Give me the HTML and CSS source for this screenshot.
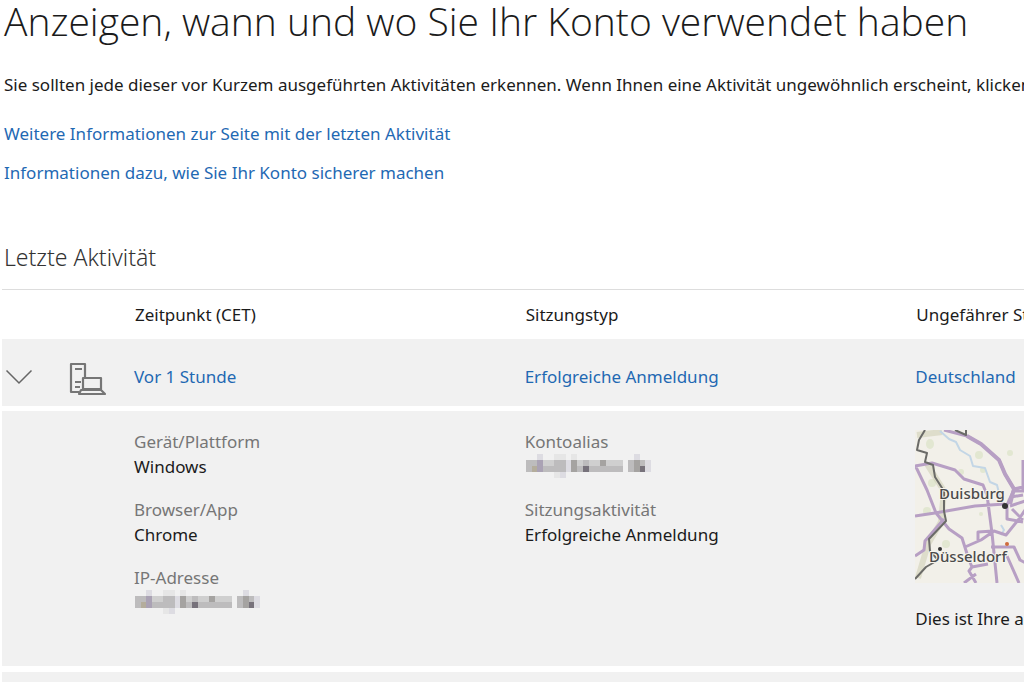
FILE: index.html
```html
<!DOCTYPE html>
<html lang="de">
<head>
<meta charset="utf-8">
<title>Letzte Aktivität</title>
<link rel="stylesheet" href="styles.css">
</head>
<body>
<svg class="defs" aria-hidden="true">
  <symbol id="redacted" viewBox="0 0 22 4" preserveAspectRatio="none">
    <g shape-rendering="crispEdges">
      <path fill="#bdbcbd" d="M0 1h17v2H0zM18 1h3v2h-3z"/>
      <path fill="#dddce2" d="M2 0h1v1H2zM6 3h1v1H6zM19 0h1v1h-1zM21 1h1v2h-1zM7 1h1v2H7z"/>
      <path fill="#e6e6e6" d="M5 0h2v1H5zM5 3h1v1H5zM8 0h1v1H8z"/>
      <path fill="#cfcfcf" d="M3 1h2v1H3zM9 1h1v1H9zM11 1h2v1h-2zM14 1h3v1h-3z"/>
      <path fill="#aaa2b4" d="M2 1h1v2H2z"/>
      <path fill="#b4ad9c" d="M1 2h1v1H1z"/>
      <path fill="#a5a3a1" d="M8 1h1v2H8zM13 1h1v1h-1zM19 1h1v2h-1z"/>
      <path fill="#77727b" d="M10 2h1v1h-1zM20 2h1v1h-1z"/>
    </g>
  </symbol>
</svg>
<main class="page">
  <h1 class="title">Anzeigen, wann und wo Sie Ihr Konto verwendet haben</h1>
  <p class="intro">Sie sollten jede dieser vor Kurzem ausgeführten Aktivitäten erkennen. Wenn Ihnen eine Aktivität ungewöhnlich erscheint, klicken</p>
  <ul class="links">
    <li><a href="#info">Weitere Informationen zur Seite mit der letzten Aktivität</a></li>
    <li><a href="#sicherheit">Informationen dazu, wie Sie Ihr Konto sicherer machen</a></li>
  </ul>
  <h2 class="subtitle">Letzte Aktivität</h2>
  <table class="activity">
    <colgroup><col class="col-icons"><col><col><col></colgroup>
    <thead>
      <tr><td></td><th scope="col">Zeitpunkt (CET)</th><th scope="col">Sitzungstyp</th><th scope="col">Ungefährer Standort</th></tr>
    </thead>
    <tbody>
      <tr class="summary">
        <td>
          <div class="icons">
            <button class="toggle" type="button" aria-label="Details ausblenden" aria-expanded="true">
              <svg width="28" height="16" viewBox="0 0 28 16" fill="none" stroke="#666" stroke-width="1.5"><path d="M1.500 1.500 14 14 26.500 1.500"/></svg>
            </button>
            <svg width="38" height="34" viewBox="0 0 38 34" fill="none" stroke="#767676" stroke-width="2.200" stroke-linejoin="round"><path d="M10 30H2V2h14v13M6 7h7M6 20h6M6 25h5M14 16h18v11H14zM12 28h20l4 4H10z"/></svg>
          </div>
        </td>
        <td><a href="#aktivitaet">Vor 1 Stunde</a></td>
        <td><a href="#aktivitaet">Erfolgreiche Anmeldung</a></td>
        <td><a href="#aktivitaet">Deutschland</a></td>
      </tr>
      <tr class="details">
        <td></td>
        <td>
          <dl>
            <div><dt>Gerät/Plattform</dt><dd>Windows</dd></div>
            <div><dt>Browser/App</dt><dd>Chrome</dd></div>
            <div><dt>IP-Adresse</dt><dd class="hidden-value"><svg class="redacted" role="img" aria-label="Unkenntlich gemacht"><use href="#redacted"/></svg></dd></div>
          </dl>
        </td>
        <td>
          <dl>
            <div><dt>Kontoalias</dt><dd class="hidden-value"><svg class="redacted" role="img" aria-label="Unkenntlich gemacht"><use href="#redacted"/></svg></dd></div>
            <div><dt>Sitzungsaktivität</dt><dd>Erfolgreiche Anmeldung</dd></div>
          </dl>
        </td>
        <td>
          <svg class="map" viewBox="0 0 300 153" width="300" height="153" fill="none" stroke-linejoin="round">
            <rect width="300" height="153" fill="#f2f0e9"/>
            <g fill="#d8e2c2" opacity=".6">
              <ellipse cx="15" cy="14" rx="4" ry="5"/><circle cx="64" cy="25" r="4"/><circle cx="46" cy="42" r="3"/><circle cx="68" cy="40" r="3"/><circle cx="95" cy="23" r="3"/><circle cx="17" cy="53" r="4"/><circle cx="12" cy="81" r="4"/><circle cx="31" cy="114" r="4"/><circle cx="95" cy="71" r="3"/><circle cx="66" cy="84" r="2"/>
            </g>
            <g stroke="#c9c9ad" stroke-width="6" opacity=".5"><path d="M12 34 29 61 26 92 13 114 3 148M2 5 27 2"/></g>
            <path stroke="#c3d6e6" stroke-width="2" d="M25 1 34 9 41 12 45 20 55 26 58 36 70 38 75 52 82 55 85 67M86 95l3 5-3 5"/>
            <g stroke="#b79fc4" stroke-width="3">
              <path d="M29 0 52 6 66 14 84 30 90 44 99 59 120 54M0 36 17 33 40 40 49 49 68 55 72 65 77 103 82 153M0 86 20 83 60 76 90 74M0 35 12 60 21 83 34 99 47 108 54 130 57 137 54 141 61 153M0 126 9 120 10 111 29 89M50 117 66 110 79 101 91 105 104 89 110 80M63 110V102L78 101M57 137 73 134M49 153 61 144M76 117H99L105 130 120 138M92 126 104 153M100 57 92 75V89L108 92M98 61 110 61M96 67 108 65M95 76 110 71M108 30V60M97 79 108 90"/>
            </g>
            <path stroke="#b79fc4" stroke-width="4" d="M52 6 66 14 84 30 90 44 99 59 95 74"/>
            <path stroke="#6b6b68" stroke-width="2" d="M10 0 4 10 2 20 12 23 10 32 18 35 20 47 29 61V81L31 91 14 109 15 121 23 130 11 137 0 149M40 0 51 5V0"/>
            <circle cx="90" cy="76" r="3" fill="#333"/><circle cx="92" cy="114" r="2" fill="#cf6b3c"/><circle cx="25" cy="119" r="2" fill="#333"/>
            <g class="map-labels"><text x="24" y="69">Duisburg</text><text x="14" y="132">Düsseldorf</text></g>
          </svg>
          <p class="map-note">Dies ist Ihre aktuelle Sitzung.</p>
        </td>
      </tr>
      <tr class="next"><td colspan="4"></td></tr>
    </tbody>
  </table>
</main>
</body>
</html>
```
FILE: styles.css
```css
body {
  margin: 0;
  overflow: hidden;
  background: #fff;
  color: #1b1b1b;
  font: 17px/24px "Noto Sans", "Open Sans", sans-serif;
}
.defs { position: absolute; width: 0; height: 0; }
.page { padding-left: 2px; }
.title, .intro, .links, .subtitle { margin: 0; padding: 0 0 0 2px; white-space: nowrap; }
.title { font-family: "Open Sans", "Noto Sans", sans-serif; font-size: 39px; line-height: 42px; font-weight: 300; }
.intro { margin-top: 31px; }
.links { margin-top: 25px; list-style: none; }
.links li + li { margin-top: 15px; }
a { color: #1f69b3; text-decoration: none; }
.subtitle { margin: 56px 0 16px; font-size: 23px; line-height: 32px; font-weight: 300; color: #333; }
.activity {
  width: 100%;
  min-width: 1304px;
  table-layout: fixed;
  border-spacing: 0;
  border-top: 1px solid #ddd;
}
.activity td, .activity th { padding: 0; text-align: left; }
.col-icons { width: 132px; }
.activity th { height: 49px; padding: 0 1px; font-weight: 400; }
.summary td { height: 67px; background: #f1f1f1; padding-top: 8px; box-sizing: border-box; }
.icons { display: flex; align-items: center; gap: 36px; padding-left: 3px; }
.toggle { display: flex; padding: 0; border: 0; background: none; }
.icons > svg { margin-top: 4px; }
.details td { border-top: 5px solid #fff; background: #f1f1f1; vertical-align: top; padding: 19px 0 35px; }
dl { margin: 0; display: grid; gap: 19px; }
dt { color: #767676; }
dd { margin: 0; padding-top: 1px; height: 24px; }
.hidden-value { padding: 0 0 1px 1px; }
.redacted { display: block; width: 125px; height: 24px; }
.map { display: block; }
.map-labels { font-family: "Noto Sans", sans-serif; font-size: 15px; font-weight: 500; fill: #4b4b4b; stroke: #f7f5ee; stroke-width: 2px; paint-order: stroke; }
.map-note { margin: 24px 0 0; }
.next td { height: 40px; border-top: 6px solid #fff; background: #f1f1f1; }
```
